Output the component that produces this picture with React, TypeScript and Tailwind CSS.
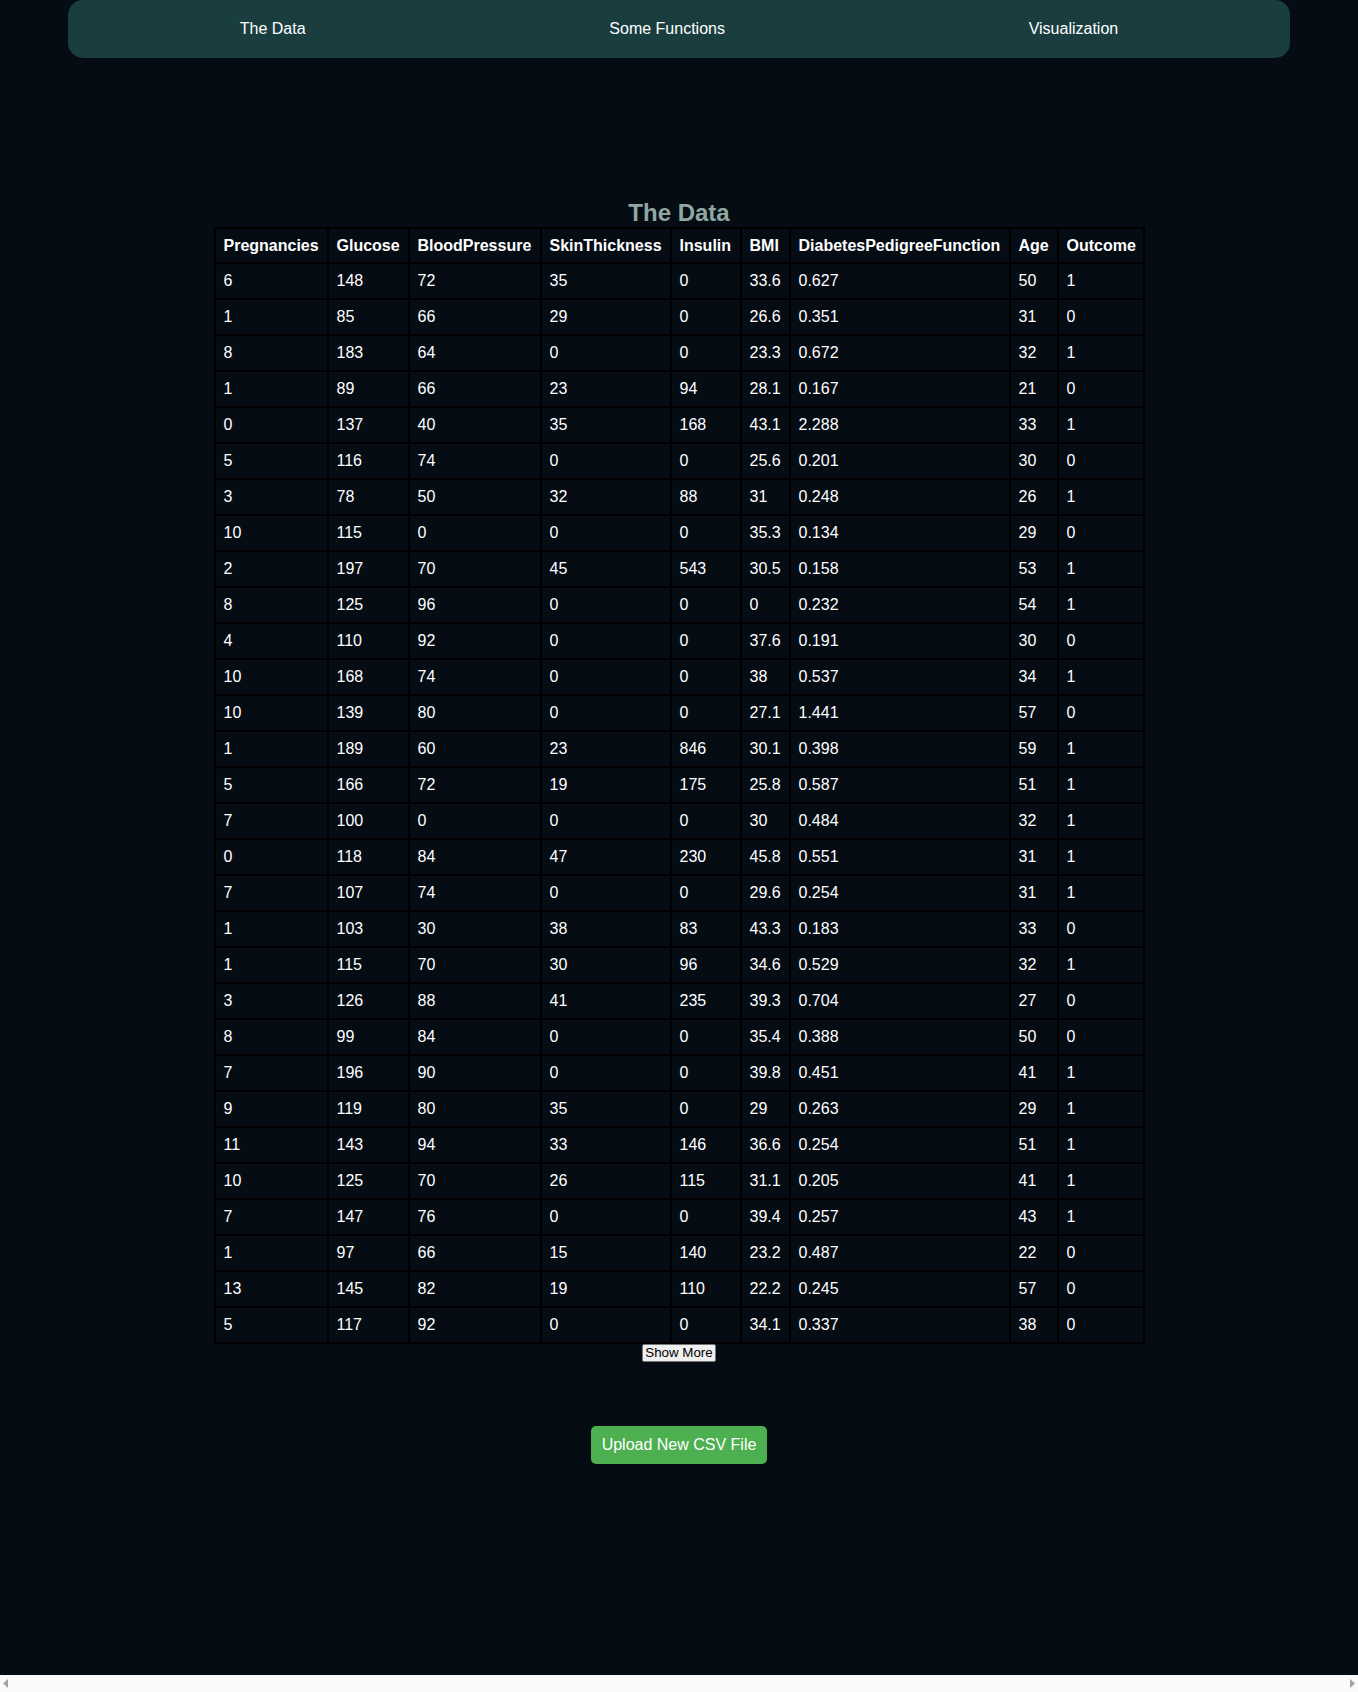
import { useEffect } from 'react';

const columns = [
  { name: 'Pregnancies', w: 'w-[111px]' },
  { name: 'Glucose', w: 'w-[79px]' },
  { name: 'BloodPressure', w: 'w-[130px]' },
  { name: 'SkinThickness', w: 'w-[128px]' },
  { name: 'Insulin', w: 'w-[68px]' },
  { name: 'BMI', w: 'w-[47px]' },
  { name: 'DiabetesPedigreeFunction', w: 'w-[218px]' },
  { name: 'Age', w: 'w-[46px]' },
  { name: 'Outcome', w: 'w-[84px]' },
];

const rows: (string | number)[][] = [
  [6, 148, 72, 35, 0, '33.6', '0.627', 50, 1],
  [1, 85, 66, 29, 0, '26.6', '0.351', 31, 0],
  [8, 183, 64, 0, 0, '23.3', '0.672', 32, 1],
  [1, 89, 66, 23, 94, '28.1', '0.167', 21, 0],
  [0, 137, 40, 35, 168, '43.1', '2.288', 33, 1],
  [5, 116, 74, 0, 0, '25.6', '0.201', 30, 0],
  [3, 78, 50, 32, 88, '31', '0.248', 26, 1],
  [10, 115, 0, 0, 0, '35.3', '0.134', 29, 0],
  [2, 197, 70, 45, 543, '30.5', '0.158', 53, 1],
  [8, 125, 96, 0, 0, '0', '0.232', 54, 1],
  [4, 110, 92, 0, 0, '37.6', '0.191', 30, 0],
  [10, 168, 74, 0, 0, '38', '0.537', 34, 1],
  [10, 139, 80, 0, 0, '27.1', '1.441', 57, 0],
  [1, 189, 60, 23, 846, '30.1', '0.398', 59, 1],
  [5, 166, 72, 19, 175, '25.8', '0.587', 51, 1],
  [7, 100, 0, 0, 0, '30', '0.484', 32, 1],
  [0, 118, 84, 47, 230, '45.8', '0.551', 31, 1],
  [7, 107, 74, 0, 0, '29.6', '0.254', 31, 1],
  [1, 103, 30, 38, 83, '43.3', '0.183', 33, 0],
  [1, 115, 70, 30, 96, '34.6', '0.529', 32, 1],
  [3, 126, 88, 41, 235, '39.3', '0.704', 27, 0],
  [8, 99, 84, 0, 0, '35.4', '0.388', 50, 0],
  [7, 196, 90, 0, 0, '39.8', '0.451', 41, 1],
  [9, 119, 80, 35, 0, '29', '0.263', 29, 1],
  [11, 143, 94, 33, 146, '36.6', '0.254', 51, 1],
  [10, 125, 70, 26, 115, '31.1', '0.205', 41, 1],
  [7, 147, 76, 0, 0, '39.4', '0.257', 43, 1],
  [1, 97, 66, 15, 140, '23.2', '0.487', 22, 0],
  [13, 145, 82, 19, 110, '22.2', '0.245', 57, 0],
  [5, 117, 92, 0, 0, '34.1', '0.337', 38, 0],
];

function App() {
  useEffect(() => {
    document.documentElement.classList.add('bg-[#050c14]');
  }, []);

  return (
    <div className="bg-[#050c14] text-white font-['Liberation_Sans',Arial,sans-serif]">
      <nav className="w-[90%] mx-auto h-[58px] bg-[#1a3d3f] rounded-[15px] flex items-center justify-around px-5 text-base">
        <a className="cursor-pointer">The Data</a>
        <a className="cursor-pointer">Some Functions</a>
        <a className="cursor-pointer">Visualization</a>
      </nav>

      <section className="pt-[141px] flex flex-col items-center">
        <h2 className="text-2xl leading-[28px] font-bold text-[#8fa8a2]">The Data</h2>
        <table className="table-fixed w-[931px] border-separate border-spacing-[2px] bg-black text-base text-left">
          <thead>
            <tr>
              {columns.map((c) => (
                <th key={c.name} className={`${c.w} bg-[#050c14] px-2 py-2 leading-[17px] font-bold whitespace-nowrap`}>
                  {c.name}
                </th>
              ))}
            </tr>
          </thead>
          <tbody>
            {rows.map((r, i) => (
              <tr key={i}>
                {r.map((v, j) => (
                  <td key={j} className="bg-[#050c14] px-2 py-2 leading-[18px]">
                    {v}
                  </td>
                ))}
              </tr>
            ))}
          </tbody>
        </table>
        <button className="bg-[#efefef] text-black text-[13.33px] leading-[16px] px-[2px] border border-[#767676] rounded-[2px]">
          Show More
        </button>

        <button className="mt-[64px] bg-[#4caf50] text-white text-base leading-[18px] px-[11px] py-[10px] rounded-[5px]">
          Upload New CSV File
        </button>
      </section>

      {/* horizontal scrollbar strip at the bottom of the window */}
      <div className="fixed left-0 right-0 bottom-0 h-[17px] bg-[#fafafa] flex items-center justify-between px-[3px]">
        <svg width="6" height="9" viewBox="0 0 6 9">
          <path d="M5 0 L0 4.5 L5 9 Z" fill="#a3a3a3" />
        </svg>
        <svg width="6" height="9" viewBox="0 0 6 9">
          <path d="M1 0 L6 4.5 L1 9 Z" fill="#a3a3a3" />
        </svg>
      </div>
    </div>
  );
}

export default App;
